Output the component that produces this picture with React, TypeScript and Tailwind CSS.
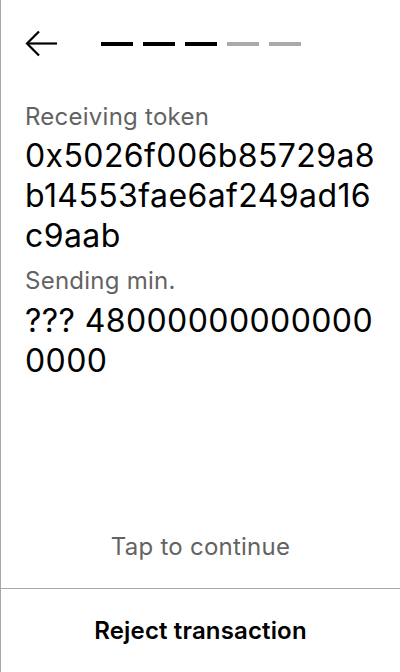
import React from 'react';

const steps = [true, true, true, false, false];

export default function App() {
  return (
    <div
      className="h-[672px] w-[400px] flex flex-col bg-white border-l border-[#a8a8a8] text-black"
      style={{ fontFamily: 'Inter, "Noto Sans", sans-serif' }}
    >
      {/* Header */}
      <div className="flex items-center px-6 pt-[30px] h-[57px]">
        <button className="w-8 h-[27px] flex items-center">
          <svg width="32" height="27" viewBox="0 0 32 27" fill="none" stroke="black" strokeWidth="2.2">
            <path d="M32 13.5H2" />
            <path d="M14 1.5L2 13.5L14 25.5" />
          </svg>
        </button>
        <div className="flex gap-[10px] ml-11">
          {steps.map((done, i) => (
            <div key={i} className={`w-8 h-[4px] ${done ? 'bg-black' : 'bg-[#aaaaaa]'}`} />
          ))}
        </div>
      </div>

      {/* Content */}
      <div className="flex-1 px-6 pt-[44px]">
        <p className="text-[24px] leading-[32px] tracking-[0.25px] text-[#636363]">Receiving token</p>
        <p className="text-[32px] leading-[40px] tracking-[0.4px] break-all mt-[3px]">0x5026f006b85729a8b14553fae6af249ad16c9aab</p>
        <p className="text-[24px] leading-[32px] tracking-[0.25px] text-[#636363] mt-[9px]">Sending min.</p>
        <p className="text-[32px] leading-[40px] tracking-[0.4px] break-all mt-1">??? 480000000000000000</p>
      </div>

      <div className="text-center text-[24px] leading-[32px] tracking-[0.25px] text-[#636363] pb-[25px]">Tap to continue</div>

      {/* Bottom action */}
      <div className="border-t border-[#a8a8a8] h-[84px] flex items-center justify-center">
        <span className="text-[24px] leading-[32px] tracking-[0.15px] font-semibold">Reject transaction</span>
      </div>
    </div>
  );
}
